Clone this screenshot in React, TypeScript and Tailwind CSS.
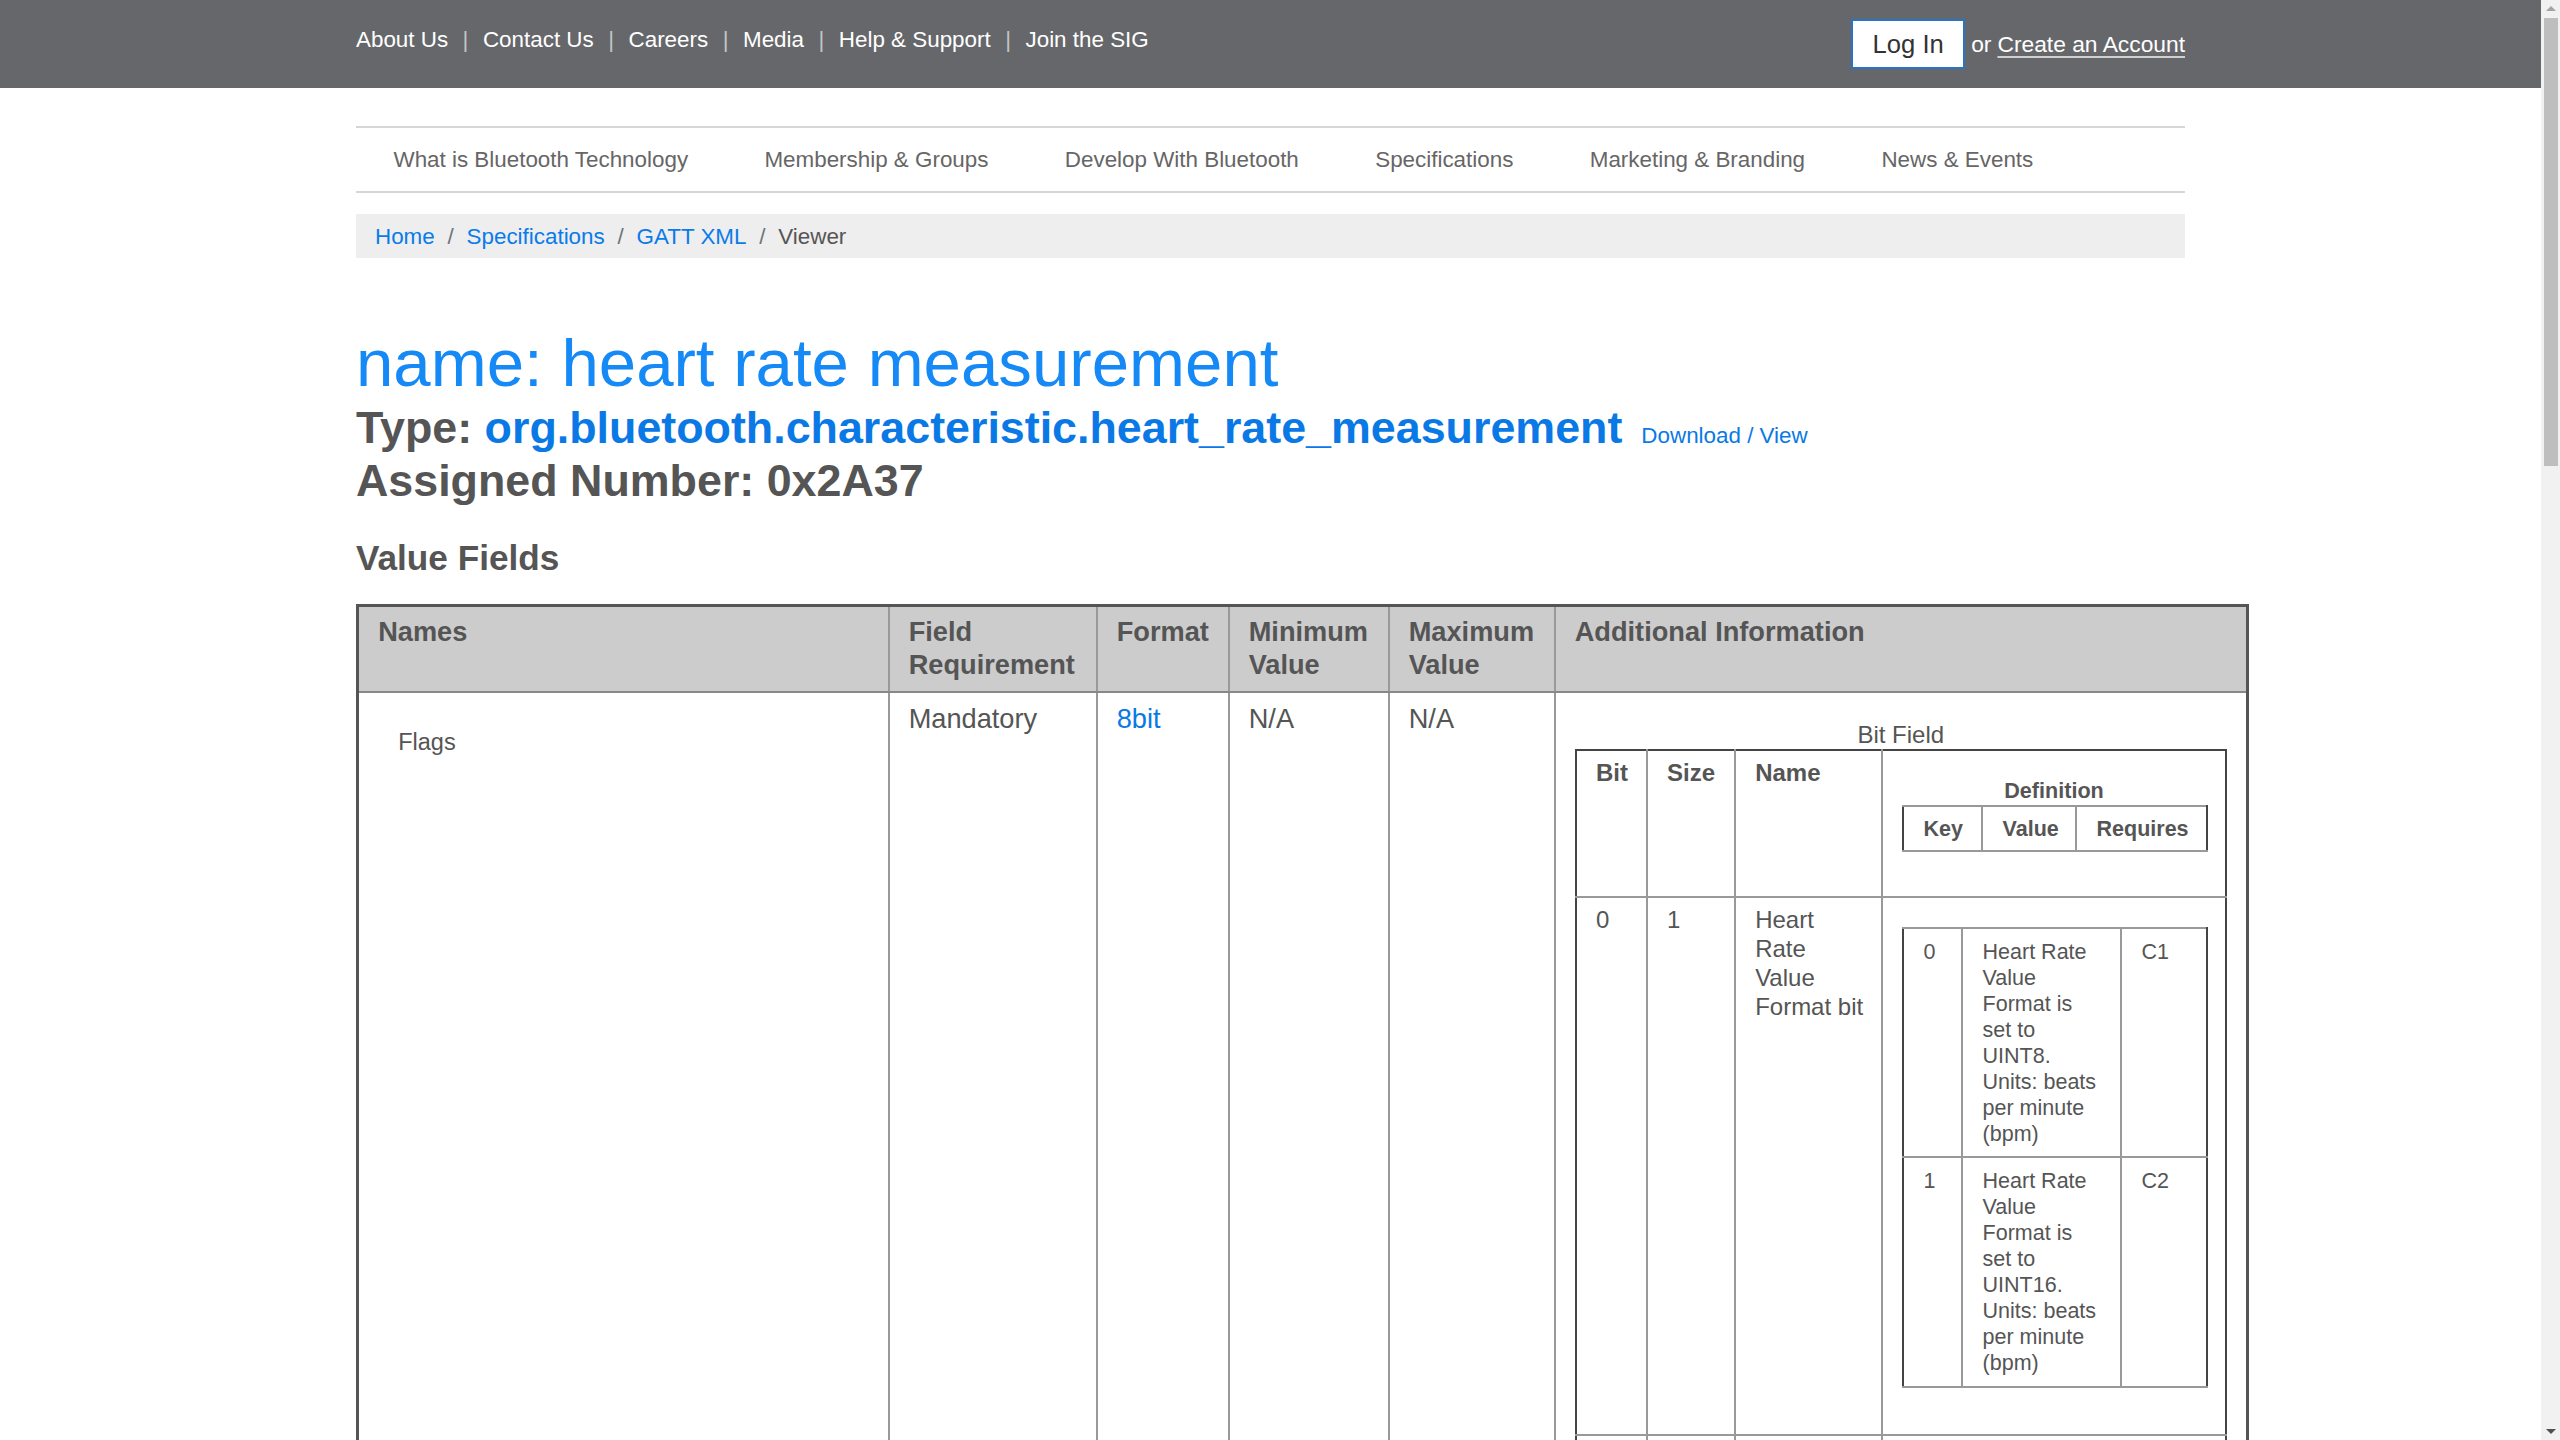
import React from "react";

const topLinks = ["About Us", "Contact Us", "Careers", "Media", "Help & Support", "Join the SIG"];
const navItems = [
  "What is Bluetooth Technology",
  "Membership & Groups",
  "Develop With Bluetooth",
  "Specifications",
  "Marketing & Branding",
  "News & Events",
];

function TopBar() {
  return (
    <div className="shrink-0 h-[88px] bg-[#66676b] pl-[356px]">
      <div className="w-[1829px] flex justify-between">
        <div className="flex items-center pt-[11.5px] text-[22.4px] leading-[34px] text-white">
          {topLinks.map((l, i) => (
            <React.Fragment key={l}>
              {i > 0 && <span className="mx-[14.5px] text-[#c4c4c4]">|</span>}
              <span>{l}</span>
            </React.Fragment>
          ))}
        </div>
        <div className="flex items-center pt-[19px] text-[22.8px] text-white">
          <div className="h-[50px] w-[114px] border-2 border-[#2a74c6] bg-white text-[25.6px] text-[#333] flex items-center justify-center">
            Log In
          </div>
          <span className="ml-[6px]">or</span>
          <span className="ml-[6px] underline decoration-[#d0d0d0] underline-offset-[4px]">Create an Account</span>
        </div>
      </div>
    </div>
  );
}

function Nav() {
  return (
    <div className="mt-[38px] h-[67px] border-y-2 border-[#d6d6d6] flex items-center text-[22.4px] text-[#666]">
      {navItems.map((n) => (
        <span key={n} className="px-[38.2px] first:pl-[37.5px]">
          {n}
        </span>
      ))}
    </div>
  );
}

function Breadcrumb() {
  const sep = <span className="px-[12.8px] text-[#6c757d]">/</span>;
  return (
    <div className="mt-[21px] h-[44px] bg-[#eeeeee] flex items-center px-[19px] pt-[1px] text-[22.4px] leading-[30px]">
      <span className="text-[#0a7bea]">Home</span>
      {sep}
      <span className="text-[#0a7bea]">Specifications</span>
      {sep}
      <span className="text-[#0a7bea]">GATT XML</span>
      {sep}
      <span className="text-[#555]">Viewer</span>
    </div>
  );
}

function Heading() {
  return (
    <div>
      <div className="mt-[69px] text-[67.2px] leading-[72.6px] text-[#1589f5]">name: heart rate measurement</div>
      <div className="mt-[1px] text-[44.8px] leading-[53px] font-bold text-[#555] whitespace-nowrap">
        Type: <span className="text-[#0a79e6]">org.bluetooth.characteristic.heart_rate_measurement</span>
        <span className="ml-[19px] text-[22.4px] leading-none font-normal text-[#0a79e6]">Download / View</span>
      </div>
      <div className="text-[44.8px] leading-[53px] font-bold text-[#555]">Assigned Number: 0x2A37</div>
      <div className="mt-[30px] text-[35.2px] leading-[42px] font-bold text-[#555]">Value Fields</div>
    </div>
  );
}

function DefTable({ rows }: { rows: { key: string; lines: string[]; req: string }[] }) {
  return (
    <table className="border-collapse table-fixed w-[304px] border-2 border-[#444] text-[21.5px] leading-[26px]">
      <colgroup>
        <col className="w-[59px]" />
        <col className="w-[159px]" />
        <col className="w-[86px]" />
      </colgroup>
      <tbody>
        {rows.map((r) => (
          <tr key={r.key}>
            <td className="border-2 border-[#999] border-l-[#444] align-top px-[19.2px] py-[9.6px]">{r.key}</td>
            <td className="border-2 border-[#999] align-top px-[19.2px] py-[9.6px]">
              {r.lines.map((l, i) => (
                <span key={i} className="block whitespace-nowrap">
                  {l}
                </span>
              ))}
            </td>
            <td className="border-2 border-[#999] border-r-[#444] align-top px-[19.2px] py-[9.6px]">{r.req}</td>
          </tr>
        ))}
      </tbody>
    </table>
  );
}

function BitTable() {
  const th = "border-2 border-[#999] align-top text-left px-[19.2px] pt-[8px] font-bold";
  const td = "border-2 border-[#999] align-top px-[19.2px] pt-[8px]";
  return (
    <table className="border-collapse table-fixed w-full border-2 border-[#444] text-[24px] leading-[28.8px]">
      <colgroup>
        <col className="w-[71px]" />
        <col className="w-[88px]" />
        <col className="w-[147px]" />
        <col className="w-[343px]" />
      </colgroup>
      <thead>
        <tr>
          <th className={th + " border-l-[#444] border-t-[#444]"}>Bit</th>
          <th className={th + " border-t-[#444]"}>Size</th>
          <th className={th + " border-t-[#444]"}>Name</th>
          <th className="border-2 border-[#999] border-t-[#444] border-r-[#444] align-top p-0 font-bold">
            <div className="pt-[27px] text-center text-[21.6px] leading-[26px]">Definition</div>
            <div className="px-[19.2px] pt-[1px] pb-[44px]">
              <table className="border-collapse table-fixed w-[304px] border-2 border-[#444] text-[21.5px] leading-[26px]">
                <colgroup>
                  <col className="w-[79px]" />
                  <col className="w-[94px]" />
                  <col className="w-[131px]" />
                </colgroup>
                <tbody>
                  <tr>
                    <td className="border-2 border-[#999] border-l-[#444] text-left px-[19.2px] py-[8.4px]">Key</td>
                    <td className="border-2 border-[#999] text-left px-[19.2px] py-[8.4px]">Value</td>
                    <td className="border-2 border-[#999] border-r-[#444] text-left px-[19.2px] py-[8.4px]">Requires</td>
                  </tr>
                </tbody>
              </table>
            </div>
          </th>
        </tr>
      </thead>
      <tbody>
        <tr>
          <td className={td + " border-l-[#444]"}>0</td>
          <td className={td}>1</td>
          <td className={td}>
            {["Heart", "Rate", "Value", "Format bit"].map((l) => (
              <span key={l} className="block whitespace-nowrap">
                {l}
              </span>
            ))}
          </td>
          <td className="border-2 border-[#999] border-r-[#444] align-top px-[19.2px] pt-[29px] pb-[46px]">
            <DefTable
              rows={[
                {
                  key: "0",
                  lines: ["Heart Rate", "Value", "Format is", "set to", "UINT8.", "Units: beats", "per minute", "(bpm)"],
                  req: "C1",
                },
                {
                  key: "1",
                  lines: ["Heart Rate", "Value", "Format is", "set to", "UINT16.", "Units: beats", "per minute", "(bpm)"],
                  req: "C2",
                },
              ]}
            />
          </td>
        </tr>
        <tr>
          <td className={td + " border-l-[#444] h-[400px]"} />
          <td className={td} />
          <td className={td} />
          <td className="border-2 border-[#999] border-r-[#444]" />
        </tr>
      </tbody>
    </table>
  );
}

function ValueTable() {
  const th = "border-x-2 border-[#999] border-b-2 border-b-[#888] align-top text-left px-[19.2px] py-[9.6px] font-bold";
  const td = "border-x-2 border-[#999] align-top px-[19.2px] py-[9.6px]";
  return (
    <table className="mt-[25px] border-collapse table-fixed w-[1890px] border-[3px] border-[#555] text-[27.2px] leading-[32.6px] text-[#555]">
      <colgroup>
        <col className="w-[531px]" />
        <col className="w-[208px]" />
        <col className="w-[132px]" />
        <col className="w-[160px]" />
        <col className="w-[166px]" />
        <col className="w-[693px]" />
      </colgroup>
      <thead>
        <tr className="bg-[#cccccc]">
          <th className={th}>Names</th>
          <th className={th}>
            Field
            <br />
            Requirement
          </th>
          <th className={th}>Format</th>
          <th className={th}>
            Minimum
            <br />
            Value
          </th>
          <th className={th}>
            Maximum
            <br />
            Value
          </th>
          <th className={th}>Additional Information</th>
        </tr>
      </thead>
      <tbody>
        <tr>
          <td className={td}>
            <div className="pl-[20px] pt-[26px] text-[23.5px] leading-[27px]">Flags</div>
          </td>
          <td className={td}>Mandatory</td>
          <td className={td}>
            <span className="text-[#0a79e6]">8bit</span>
          </td>
          <td className={td}>N/A</td>
          <td className={td}>N/A</td>
          <td className={td}>
            <div className="pt-[18px] text-center text-[24px] leading-[28.8px]">Bit Field</div>
            <BitTable />
          </td>
        </tr>
      </tbody>
    </table>
  );
}

function Scrollbar() {
  return (
    <div className="shrink-0 w-[19px] h-[1440px] bg-[#f1f1f1] flex flex-col items-center">
      <div className="mt-[6px] w-0 h-0 border-x-[5px] border-x-transparent border-b-[5px] border-b-[#a3a3a3]" />
      <div className="mt-[7px] w-[14px] h-[448px] bg-[#bebebe] self-start ml-[3px]" />
      <div className="flex-1" />
      <div className="mb-[6px] w-0 h-0 border-x-[5px] border-x-transparent border-t-[5px] border-t-[#505050]" />
    </div>
  );
}

export default function App() {
  return (
    <div className="flex w-[2560px] h-[1440px] overflow-hidden bg-white font-['Liberation_Sans',Arial,sans-serif] text-[#555]">
      <div className="flex-1 min-w-0 flex flex-col">
        <TopBar />
        <div className="shrink-0 pl-[356px]">
          <div className="w-[1829px]">
            <Nav />
            <Breadcrumb />
            <Heading />
          </div>
          <ValueTable />
        </div>
      </div>
      <Scrollbar />
    </div>
  );
}
